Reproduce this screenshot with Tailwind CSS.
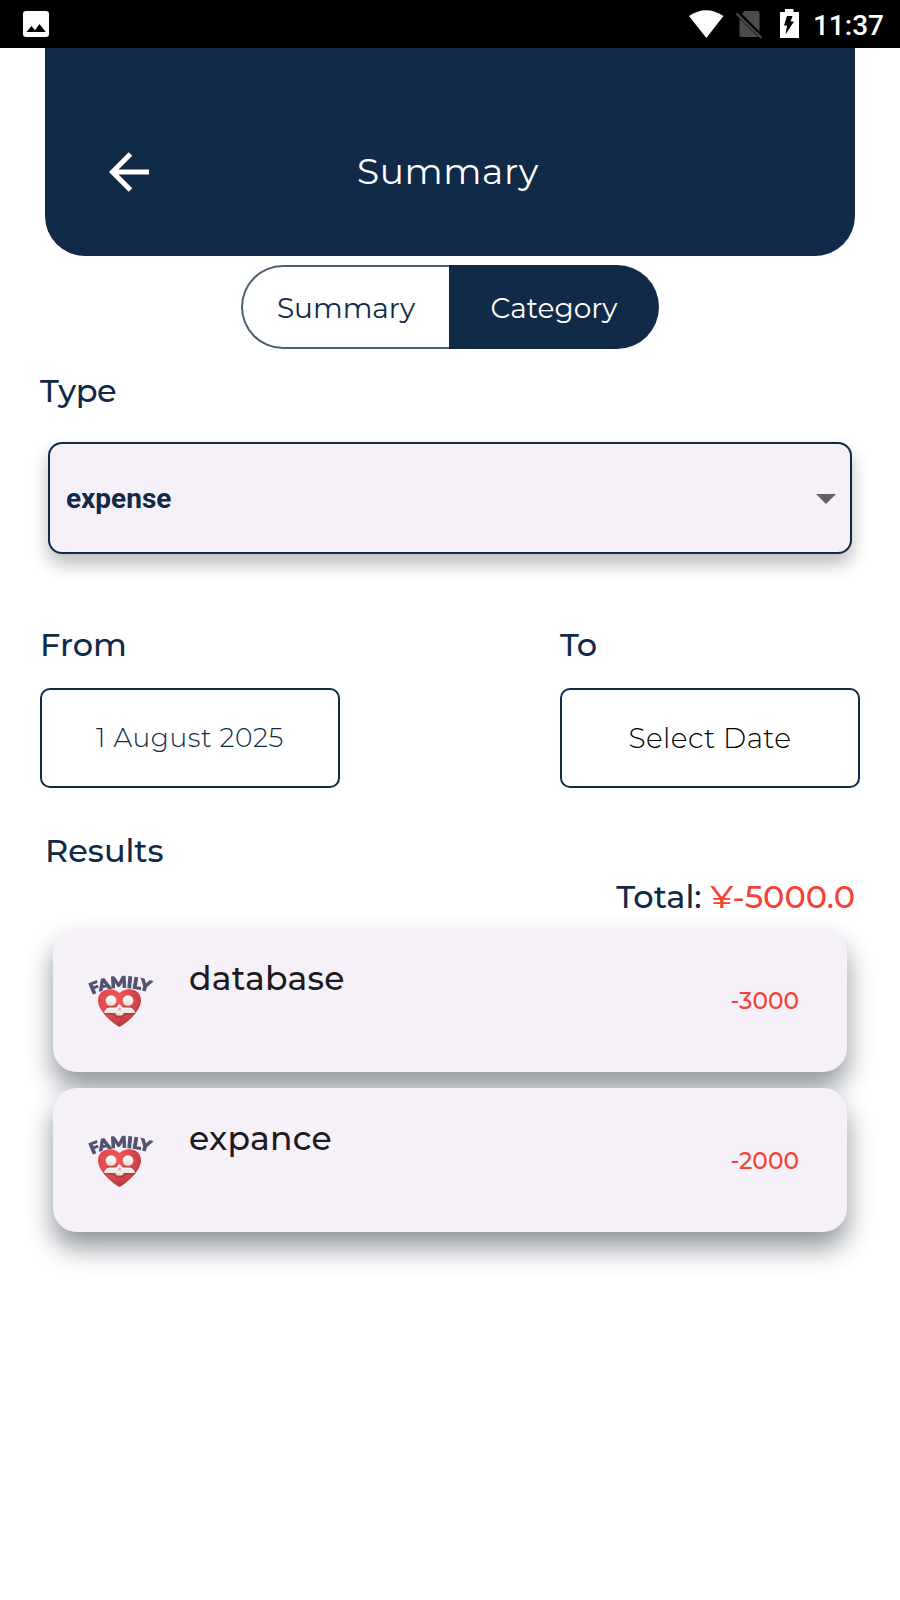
<!DOCTYPE html>
<html lang="en">
<head>
<meta charset="utf-8">
<title>Summary</title>
<script src="https://cdn.jsdelivr.net/npm/@tailwindcss/browser@4"></script>
</head>
<body class="w-[900px] h-[1600px] bg-white overflow-hidden font-[Montserrat,Inter,sans-serif] text-[#112a48]">
<svg width="0" height="0" class="absolute">
  <defs>
    <radialGradient id="heart" cx=".4" cy=".3" r=".75"><stop offset="0" stop-color="#f4585c"/><stop offset=".55" stop-color="#e2474c"/><stop offset="1" stop-color="#9c3a3e"/></radialGradient>
    <linearGradient id="fig" x1="0" y1="0" x2="0" y2="1"><stop offset="0" stop-color="#fff"/><stop offset="1" stop-color="#e2dcdc"/></linearGradient>
    <symbol id="family" viewBox="0 0 72 60">
      <path id="arc" d="M7 22.500Q36 9 68 21.500" fill="none"/>
      <text font-family="Lato" font-weight="900" font-size="15" fill="#53546f" stroke="#53546f" stroke-width="1.200"><textPath href="#arc" textLength="59" lengthAdjust="spacingAndGlyphs">FAMILY</textPath></text>
      <path d="M34.500 55C30 53 13 40 13 28.500C13 16 28 14.500 34.500 21C41 14.500 56 16 56 28.500C56 40 39 53 34.500 55Z" fill="url(#heart)"/>
      <path d="M19 42Q19 34 26 34H43Q50 34 50 42L40 43L38 46H31L29 43Z" fill="#8d3438" opacity=".5"/>
      <circle cx="26" cy="28.500" r="5.300" fill="url(#fig)"/><circle cx="43" cy="28.500" r="5.300" fill="url(#fig)"/>
      <path d="M19 41Q20 35.500 25 35.500H31L34.500 32L38 35.500H44Q49 35.500 50 41H39L37 43.500H32L30 41Z" fill="url(#fig)"/>
      <circle cx="34.500" cy="37" r="1.500" fill="#d8aaa8"/>
    </symbol>
  </defs>
</svg>
<div class="h-12 bg-black flex items-center pl-[23px] pr-[16px] text-white">
  <svg width="26" height="26" viewBox="0 0 26 26"><rect width="26" height="26" rx="3" fill="#fff"/><path d="M3.500 21L8.500 15L12 19.200L16.500 13L22.700 21Z" fill="#000"/></svg>
  <div class="ml-auto flex items-center">
    <svg width="124" height="48" viewBox="0 0 124 48"><path d="M11 16Q28 4.500 45.500 16L28.300 38Z" fill="#fff"/><path d="M61.500 18L66 11H79.500Q81.500 11 81.500 13V37H63.500Q61.500 37 61.500 35Z" fill="#4c4c4c"/><path d="M60 13.500L84 37.500" stroke="#000" stroke-width="5"/><path d="M58.500 13.500L83.500 38" stroke="#4c4c4c" stroke-width="2.200"/><path d="M102 12H107V9H115.500V12H121V38H102Z" fill="#fff"/><path d="M109 16H114.500L112.500 21.500H116L107.500 34.500L109 25.500H106Z" fill="#000"/></svg>
    <span class="ml-[11px] mt-[3px] font-[Roboto] font-medium text-[28px] leading-[32px]">11:37</span>
  </div>
</div>
<header class="mx-[45px] h-[208px] rounded-b-[40px] bg-[#112a48] flex items-center pt-[39px] pl-[64px]">
  <svg width="40" height="40" viewBox="0 0 40 40" fill="none" stroke="#fff" stroke-width="5"><path d="M21.500 2L3.500 20L21.500 38M3.500 20H40"/></svg>
  <h1 class="ml-[208px] mb-[2px] text-white text-[36px] leading-[40px] font-normal tracking-[0.600px]">Summary</h1>
</header>
<div class="mt-[9px] ml-[241px] w-[418px] h-[84px] flex text-[28px] leading-[32px] text-center">
  <div class="w-[208px] border-2 border-r-0 border-[#112a48]/75 rounded-l-full pt-[25px]">Summary</div>
  <div class="flex-1 bg-[#112a48] rounded-r-full pt-[27px] text-white">Category</div>
</div>
<main class="px-[40px]">
  <h2 class="mt-[22px] text-[32px] leading-[40px] font-medium tracking-[-0.500px]">Type</h2>
  <div class="mt-[31px] mx-[8px] h-[112px] rounded-[14px] border-2 border-[#112a48] bg-[#f6f1f9] shadow-[0_10px_18px_rgba(0,0,0,0.27)] flex items-center justify-between pt-[2px] pl-[16px] pr-[14px]">
    <span class="font-[Roboto] font-bold text-[28px]">expense</span>
    <svg width="20" height="10" viewBox="0 0 20 10"><path d="M0 0H20L10 10Z" fill="#616161"/></svg>
  </div>
  <div class="mt-[71px] flex justify-between">
    <div class="w-[300px]">
      <h2 class="text-[32px] leading-[40px] font-medium">From</h2>
      <div class="mt-[23px] h-[100px] rounded-[10px] border-2 border-[#112a48] flex items-center justify-center text-[26.500px] font-light tracking-[0.600px]">1 August 2025</div>
    </div>
    <div class="w-[300px]">
      <h2 class="text-[32px] leading-[40px] font-medium tracking-[-0.300px]">To</h2>
      <div class="mt-[23px] h-[100px] rounded-[10px] border-2 border-[#112a48] flex items-center justify-center text-[28px] font-light text-black tracking-[0.400px]">Select Date</div>
    </div>
  </div>
  <h2 class="mt-[43px] pl-[5px] text-[32px] leading-[40px] font-medium">Results</h2>
  <div class="mt-[6px] pr-[5px] flex justify-end gap-[9px] text-[32px] leading-[40px] font-medium"><span>Total:</span><span class="text-[#f44336]">¥-5000.0</span></div>
  <div class="mt-[11px] mx-[13px] flex flex-col gap-[16px] text-[#1d1b20]">
    <div class="h-[144px] rounded-[24px] bg-[#f6f1f9] shadow-[0_16px_27px_rgba(17,28,42,0.46)] flex pl-[32px] pr-[48px]">
      <svg class="mt-[44px] blur-[0.600px]" width="72" height="60"><use href="#family"/></svg>
      <span class="ml-[32px] mt-[30px] text-[33px] leading-[40px] font-medium tracking-[0.250px]">database</span>
      <span class="ml-auto self-center pt-[2px] text-[23.300px] font-medium text-[#f44336]">-3000</span>
    </div>
    <div class="h-[144px] rounded-[24px] bg-[#f6f1f9] shadow-[0_16px_27px_rgba(17,28,42,0.46)] flex pl-[32px] pr-[48px]">
      <svg class="mt-[44px] blur-[0.600px]" width="72" height="60"><use href="#family"/></svg>
      <span class="ml-[32px] mt-[30px] text-[33px] leading-[40px] font-medium tracking-[0.250px]">expance</span>
      <span class="ml-auto self-center pt-[2px] text-[23.300px] font-medium text-[#f44336]">-2000</span>
    </div>
  </div>
</main>
</body>
</html>
